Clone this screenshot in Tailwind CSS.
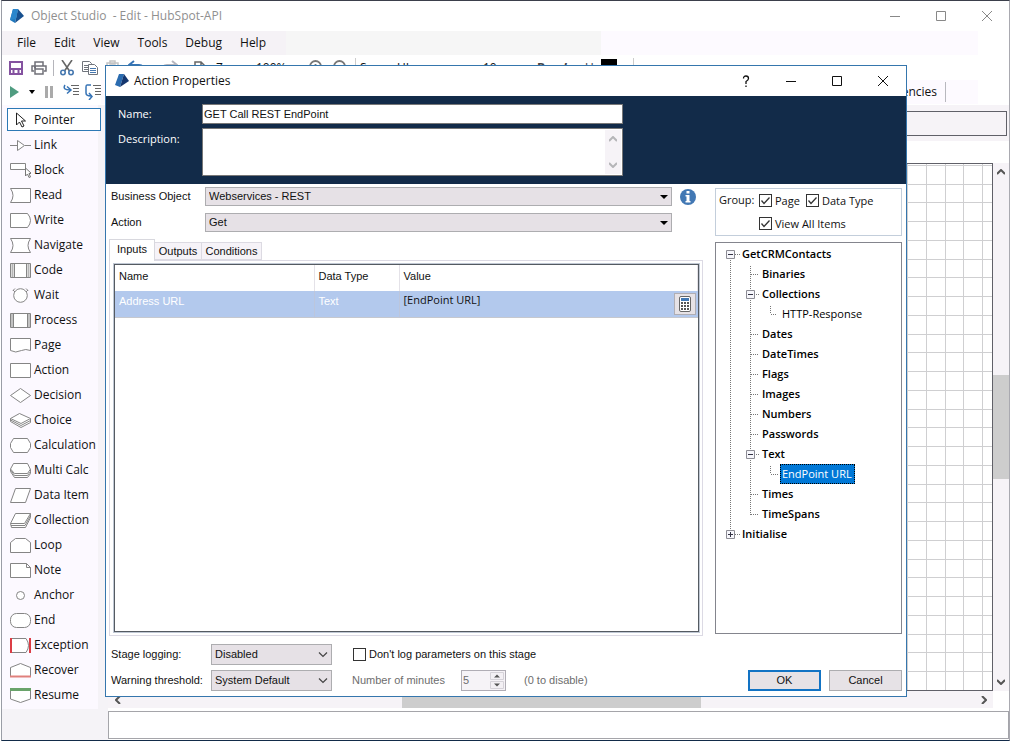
<!DOCTYPE html>
<html lang="en">
<head>
<meta charset="utf-8">
<title>Object Studio</title>
<script src="https://cdn.jsdelivr.net/npm/@tailwindcss/browser@4"></script>
</head>
<body class="relative h-screen overflow-hidden bg-white font-['Open_Sans',sans-serif] text-xs text-[#111]">
<!-- Studio window -->
<div class="mr-0.5 ml-px flex h-full flex-col border-t border-r border-b border-l border-t-[#3b3f4b] border-r-[#a9a9b0] border-b-[#122b49] border-l-[#9a9da6]">
  <header class="flex h-[30px] shrink-0 items-center bg-white pr-[17px] pl-[7px] text-[#8f8f8f]">
    <svg class="mr-1.5 size-4" viewBox="0 0 16 16"><path d="M4 1 9 1 6 15 1 12Z" fill="#1f78bd"/><path d="M9 1 15 8 6 15Z" fill="#17508f"/><path d="M4 1 9 1 7 11 1 12Z" fill="#2a86cc"/></svg>
    <span class="whitespace-pre">Object Studio  - Edit - HubSpot-API</span>
    <div class="ml-auto flex gap-9">
      <button aria-label="Minimize"><svg class="size-2.5" viewBox="0 0 10 10" stroke="#888" fill="none"><path d="M0 5.500H10"/></svg></button>
      <button aria-label="Maximize"><svg class="size-2.5" viewBox="0 0 10 10" stroke="#888" fill="none"><path d="M.5.5h9v9h-9z"/></svg></button>
      <button aria-label="Close"><svg class="size-2.5" viewBox="0 0 10 10" stroke="#888" fill="none"><path d="M0 0 10 10M10 0 0 10"/></svg></button>
    </div>
  </header>
  <div class="flex h-6 shrink-0">
    <nav class="flex w-[284px] items-center gap-[18px] bg-[#f5f2f6] pl-[15px]">
      <button>File</button><button>Edit</button><button>View</button><button>Tools</button><button>Debug</button><button>Help</button>
    </nav>
    <div class="w-[315px] bg-[#f6f6f6]"></div>
    <div class="flex-1 bg-[#fdfaff]"></div>
    <div class="w-[31px]"></div>
  </div>
  <div class="flex h-[25px] shrink-0 items-center pl-[7px] [&_svg]:shrink-0">
    <button aria-label="Save"><svg class="size-3.5" viewBox="0 0 14 14" fill="none" stroke="#8452a0" stroke-width="2"><path d="M1 1h12v12H1zM1 8h12M4.500 9v4M9.500 9v4"/></svg></button>
    <button aria-label="Print" class="ml-2"><svg class="h-3.5 w-4" viewBox="0 0 16 14" fill="none" stroke="#707078" stroke-width="1.500"><path d="M4 5V1h8v4M3 10H1V5h14v5h-2M4 8h8v5H4zM3 6.500h2"/></svg></button>
    <span class="ml-1.5 h-4 w-px bg-[#b5b5bb]"></span>
    <button aria-label="Cut" class="ml-1.5"><svg class="h-4 w-3.5" viewBox="0 0 14 16" fill="none" stroke-width="1.600"><path d="M2 0 9.500 11M12 0 4.500 11" stroke="#666"/><circle cx="3" cy="12.500" r="2.200" stroke="#4678b0"/><circle cx="11" cy="12.500" r="2.200" stroke="#4678b0"/></svg></button>
    <button aria-label="Copy" class="ml-2"><svg class="h-3.5 w-4" viewBox="0 0 16 14" fill="none" stroke="#70747c"><path d="M.5.5h7l2 2v8h-9zM2 4.500h4M2 6.500h4M2 8.500h4"/><path d="M6.500 3.500h6l3 3v7h-9z" fill="#fff"/><path d="M8 7.500h6M8 9.500h6M8 11.500h6" stroke="#4678b0"/></svg></button>
    <button aria-label="Paste" class="ml-2"><svg class="h-4 w-3.5" viewBox="0 0 14 16" fill="none" stroke="#c4c4c4" stroke-width="1.500"><path d="M1 3h11v12H1zM4 4V1h5v3z"/></svg></button>
    <button aria-label="Undo" class="ml-2"><svg class="h-4 w-[18px]" viewBox="0 0 18 16" fill="none" stroke="#3673b5" stroke-width="2"><path d="M6 1 1 5l5 4M2 5h9q5 0 5 6"/></svg></button>
    <button aria-label="Redo" class="ml-3.5"><svg class="h-4 w-[18px]" viewBox="0 0 18 16" fill="none" stroke="#b5b5bd" stroke-width="2"><path d="M12 1l5 4-5 4M16 5H7Q2 5 2 11"/></svg></button>
    <button aria-label="Page" class="ml-4"><svg class="h-3.5 w-3" viewBox="0 0 12 14" fill="none" stroke="#666" stroke-width="1.500"><path d="M1 1h6l4 4v8H1zM7 1v4h4"/></svg></button>
    <span class="ml-2.5 w-10">Zoom</span>
    <span class="w-[53px]">100%</span>
    <button aria-label="Zoom in"><svg class="h-4 w-3.5" viewBox="0 0 14 16" fill="none" stroke="#777" stroke-width="1.800"><circle cx="6.500" cy="6.500" r="5.500"/><path d="M4 6.500h5M6.500 4v5M10 11l3 4"/></svg></button>
    <button aria-label="Zoom out" class="ml-2.5"><svg class="h-4 w-3.5" viewBox="0 0 14 16" fill="none" stroke="#777" stroke-width="1.800"><circle cx="6.500" cy="6.500" r="5.500"/><path d="M4 6.500h5M10 11l3 4"/></svg></button>
    <span class="ml-2 h-5 w-px bg-[#ccc]"></span>
    <span class="ml-1 w-[123px]">Segoe UI</span>
    <span class="w-[54px]">10</span>
    <button class="w-[26px] text-left font-bold text-[#444]">B</button>
    <button class="w-[22px] text-left font-bold italic text-[#444]">I</button>
    <button class="w-4 text-left text-[#444] underline">U</button>
    <span class="mb-1 h-3.5 w-4 bg-black"></span>
    <span class="ml-4 h-5 w-px bg-[#ccc]"></span>
  </div>
  <div class="flex h-[25px] shrink-0 items-center pr-[31px] pb-px pl-2">
    <button aria-label="Run"><svg class="h-3 w-[9px]" viewBox="0 0 9 12"><path d="M0 0 9 6 0 12Z" fill="#4f9c80"/></svg></button>
    <button aria-label="Run options" class="ml-2.5"><svg class="h-1 w-1.5" viewBox="0 0 6 4"><path d="M0 0h6L3 4z"/></svg></button>
    <button aria-label="Pause" class="ml-2.5"><svg class="h-3 w-2" viewBox="0 0 8 12" fill="#aaa"><path d="M0 0h3v12H0zM5 0h3v12H5z"/></svg></button>
    <button aria-label="Step in" class="ml-2.5"><svg class="size-4" viewBox="0 0 16 16" fill="none"><path d="M2 1q-3 5 5 5M4 2.500 8 6 4 9.500" stroke="#3673b5" stroke-width="1.500"/><path d="M8 1.500h8M10 4.500h6M10 7.500h6M10 10.500h6" stroke="#666"/></svg></button>
    <button aria-label="Step over" class="ml-1.5"><svg class="size-4" viewBox="0 0 16 16" fill="none"><path d="M6 1H2Q1 1 1 3v6q0 3 5 3M4 9l3 3.500L4 16" stroke="#3673b5" stroke-width="1.500"/><path d="M8 1.500h8M10 4.500h6M10 7.500h6M10 10.500h6" stroke="#666"/></svg></button>
    <div class="flex flex-1 items-center justify-end gap-2 self-stretch bg-[#fdfaff] pr-8"><span>Dependencies</span><span class="h-5 w-px bg-[#b8b8be]"></span></div>
  </div>
  <div class="flex min-h-0 flex-1">
    <!-- Stage palette -->
    <aside class="flex w-[106px] shrink-0 flex-col bg-[#f5f3f7]">
      <div class="mr-2.5 flex flex-col bg-[#fcf9ff] pt-0.5 pb-0.5 [&_button]:flex [&_button]:h-[25px] [&_button]:items-center [&_button]:gap-[3px] [&_button]:pl-2 [&_button]:text-left [&_button]:whitespace-nowrap [&_svg]:h-4 [&_svg]:w-[21px] [&_svg]:shrink-0 [&_svg]:fill-white [&_svg]:stroke-[#858585]">
        <button class="relative"><span class="absolute inset-y-px -right-[3px] left-[5px] border border-[#2c79b5] bg-white"></span><svg class="relative" viewBox="0 0 21 16"><path d="M6.500 1v12l3-3 2.500 5 2-1-2.500-5h4z" stroke="#222"/></svg><span class="relative">Pointer</span></button>
        <button><svg viewBox="0 0 21 16"><path d="M0 8.500h7M15 8.500h6M7.500 3.500v10l7-5z"/></svg>Link</button>
        <button><svg viewBox="0 0 21 16"><path d="M.5 1.500h15v6H.5z"/><path d="M15.500 6v8l2-2 1.500 3.500 1.500-.5-1.500-3.500h2.500z" stroke="#777"/></svg>Block</button>
        <button><svg viewBox="0 0 21 16"><path d="M.5 1.500h20v14H.5q5-7 0-14z"/></svg>Read</button>
        <button><svg viewBox="0 0 21 16"><path d="M.5 1.500h17q6 7 0 14H.5z"/></svg>Write</button>
        <button><svg viewBox="0 0 21 16"><path d="M.5 1.500h20q-5 7 0 14H.5q5-7 0-14z"/></svg>Navigate</button>
        <button><svg viewBox="0 0 21 16"><path d="M.5 1.500h20v14H.5z"/><path d="M2.500 2v13M18.500 2v13" stroke-width="2" opacity=".6"/><path d="M4.500 2v13M16.500 2v13"/></svg>Code</button>
        <button><svg viewBox="0 0 21 16"><circle cx="10.500" cy="8.500" r="6.800"/><path d="M3 3.500 5 1.500M18 3.500 16 1.500M5 5 3 3M16 5l2-2"/></svg>Wait</button>
        <button><svg viewBox="0 0 21 16"><path d="M.5 1.500h20v14H.5zM3.500 1.500v14M17.500 1.500v14M2 2v13M19 2v13"/></svg>Process</button>
        <button><svg viewBox="0 0 21 16"><path d="M.5 1.500h20v12q-5-2-9 0-6 3-11 0z"/></svg>Page</button>
        <button><svg viewBox="0 0 21 16"><path d="M.5 1.500h20v14H.5z"/></svg>Action</button>
        <button><svg viewBox="0 0 21 16"><path d="M.5 8.500l10-7 10 7-10 7z"/></svg>Decision</button>
        <button><svg viewBox="0 0 21 16"><path d="M.5 9.500 11 15.500l9.500-5v-4L9.500 1.500.5 6.500z"/><path d="M.5 6.500 11 11.500l9.500-5M.5 8 11 13.500l9.500-5"/></svg>Choice</button>
        <button><svg viewBox="0 0 21 16"><path d="M3.500 1.500h14l3 5v4l-3 5h-14l-3-5v-4z"/></svg>Calculation</button>
        <button><svg viewBox="0 0 21 16"><path d="M3.500 1.500h14l3 6v4l-3 4h-13l-4-6V7z"/><path d="M.5 7l4 4.500h13l3-4.500M1 8.500l3.500 5h13l3-4"/></svg>Multi Calc</button>
        <button><svg viewBox="0 0 21 16"><path d="M5.500 1.500h15l-5 14H.5z"/></svg>Data Item</button>
        <button><svg viewBox="0 0 21 16"><path d="M5.500 1.500h15v4l-5 10h-14l-1-4z"/><path d="M.5 11.500h14l6-10M1 13.500h14l5.500-10"/></svg>Collection</button>
        <button><svg viewBox="0 0 21 16"><path d="M.5 15.500v-10l5-4h10l5 4v10z"/></svg>Loop</button>
        <button><svg viewBox="0 0 21 16"><path d="M.5 1.500h16l4 4v10H.5zM16.500 1.500v4h4"/></svg>Note</button>
        <button><svg viewBox="0 0 21 16"><circle cx="10.500" cy="8.500" r="4"/></svg>Anchor</button>
        <button><svg viewBox="0 0 21 16"><rect x=".5" y="1.500" width="20" height="14" rx="6"/></svg>End</button>
        <button><svg viewBox="0 0 21 16"><path d="M1 1.500h15q5 7 0 14H1z"/><path d="M1 1v15M20 1v15" stroke="#dc3d45" stroke-width="2"/></svg>Exception</button>
        <button><svg viewBox="0 0 21 16"><path d="M.5 14.500v-9l10-4 10 4v9z"/><path d="M0 14.500h21" stroke="#e0807c" stroke-width="2"/></svg>Recover</button>
        <button><svg viewBox="0 0 21 16"><path d="M.5 2v10l10 3.500 10-3.500V2z"/><path d="M0 2.500h21" stroke="#69a36a" stroke-width="3"/></svg>Resume</button>
      </div>
    </aside>
    <!-- Diagram area -->
    <main class="flex min-w-0 flex-1 flex-col">
      <div class="h-9 shrink-0 bg-[#f6f3f7] pt-1.5 pr-0.5"><div class="h-[25px] border border-[#606068]"></div></div>
      <div class="mt-[22px] flex min-h-0 flex-1">
        <div class="min-w-0 flex-1 border border-[#606068]">
          <svg class="size-full"><defs><pattern id="grid" width="75" height="75" patternUnits="userSpaceOnUse" x="67" y="1"><path d="M.5 0v75M19.500 0v75M37.500 0v75M56.500 0v75M0 .5h75M0 19.500h75M0 37.500h75M0 56.500h75" stroke="#cfcfd1" fill="none"/></pattern></defs><rect width="100%" height="100%" fill="url(#grid)"/></svg>
        </div>
        <div class="flex w-4 shrink-0 flex-col items-center justify-between bg-[#f6f3f7] py-1.5">
          <svg class="h-1.5 w-2" viewBox="0 0 8 6" fill="none" stroke="#555" stroke-width="2"><path d="M0 5l4-4 4 4"/></svg>
          <div class="h-[104px] w-full bg-[#cdcdcd]"></div>
          <svg class="h-1.5 w-2" viewBox="0 0 8 6" fill="none" stroke="#555" stroke-width="2"><path d="M0 1l4 4 4-4"/></svg>
        </div>
      </div>
      <div class="mr-4 mb-[3px] flex h-[17px] shrink-0 items-center justify-between bg-[#f6f3f7] pr-1.5 pl-[7px]">
        <svg class="h-2 w-1.5" viewBox="0 0 6 8" fill="none" stroke="#555" stroke-width="2"><path d="M5 0 1 4l4 4"/></svg>
        <div class="h-full w-[299px] bg-[#cdcdcd]"></div>
        <svg class="h-2 w-1.5" viewBox="0 0 6 8" fill="none" stroke="#555" stroke-width="2"><path d="M1 0l4 4-4 4"/></svg>
      </div>
      <div class="mb-px h-7 shrink-0 border border-[#a5a5aa]"></div>
    </main>
  </div>
</div>

<!-- Action Properties dialog -->
<section role="dialog" aria-label="Action Properties" class="absolute inset-x-[105px] top-[65px] bottom-11 flex flex-col border border-[#3576ad] bg-white font-['Liberation_Sans',sans-serif] text-[11px]">
  <header class="flex h-[30px] shrink-0 items-center pr-[18px] pl-2 font-['Open_Sans',sans-serif] text-xs">
    <svg class="mr-1 size-4" viewBox="0 0 16 16"><path d="M5 1h5L6 14 1 12z" fill="#2b6cb0"/><path d="M10 1l5 7-9 6z" fill="#14366e"/></svg>
    <h1>Action Properties</h1>
    <div class="ml-auto flex items-center gap-9">
      <button aria-label="Help"><svg class="h-3 w-2" viewBox="0 0 8 12" fill="none" stroke="#111" stroke-width="1.300"><path d="M1.500 3.500Q1.500 1 4 1t2.500 2.500Q6.500 5 4 6.500V9M4 10.500V12"/></svg></button>
      <button aria-label="Minimize"><svg class="size-2.5" viewBox="0 0 10 10" stroke="#111" fill="none"><path d="M0 5.500h10"/></svg></button>
      <button aria-label="Maximize"><svg class="size-2.5" viewBox="0 0 10 10" stroke="#111" fill="none"><path d="M.5.5h9v9h-9z"/></svg></button>
      <button aria-label="Close"><svg class="size-2.5" viewBox="0 0 10 10" stroke="#111" fill="none"><path d="M0 0l10 10M10 0 0 10"/></svg></button>
    </div>
  </header>
  <div class="grid h-[88px] shrink-0 grid-cols-[84px_421px] content-start gap-y-1 bg-[#122b49] pt-2 pl-3">
    <label for="name" class="self-center font-['Open_Sans',sans-serif] text-white">Name:</label>
    <input id="name" value="GET Call REST EndPoint" class="h-5 border border-[#777] bg-white px-px">
    <label for="desc" class="pt-[3px] font-['Open_Sans',sans-serif] leading-4 text-white">Description:</label>
    <div class="flex h-12 border border-[#777] bg-white p-px">
      <textarea id="desc" class="flex-1 resize-none overflow-hidden"></textarea>
      <div class="flex w-4 flex-col items-center justify-between bg-[#f6f3f7] py-1.5">
        <svg class="h-1.5 w-2" viewBox="0 0 8 6" fill="none" stroke="#b5b5b8" stroke-width="2"><path d="M0 5l4-4 4 4"/></svg>
        <svg class="h-1.5 w-2" viewBox="0 0 8 6" fill="none" stroke="#b5b5b8" stroke-width="2"><path d="M0 1l4 4 4-4"/></svg>
      </div>
    </div>
  </div>
  <div class="flex min-h-0 flex-1 gap-3 pt-[3px] pr-1 pl-[3px]">
    <div class="flex min-w-0 flex-1 flex-col">
      <div class="grid shrink-0 grid-cols-[94px_1fr_31px] items-center gap-y-[7px] pl-0.5">
        <label for="bo">Business Object</label>
        <div class="relative h-[19px]"><select id="bo" class="size-full appearance-none border border-[#adadb0] bg-[#e6e1e6] pl-[3px]"><option>Webservices - REST</option></select><svg class="pointer-events-none absolute top-2 right-1 h-1 w-2" viewBox="0 0 8 4"><path d="M0 0h8L4 4z"/></svg></div>
        <button aria-label="Information" class="justify-self-center"><svg class="size-4" viewBox="0 0 16 16"><circle cx="8" cy="8" r="8" fill="#4278b4"/><path d="M6.500 2h3v2.500h-3zM5.500 6h4v6h1v1.500h-5V12h1V7.500h-1z" fill="#fff"/></svg></button>
        <label for="action">Action</label>
        <div class="relative h-[19px]"><select id="action" class="size-full appearance-none border border-[#adadb0] bg-[#e6e1e6] pl-[3px]"><option>Get</option></select><svg class="pointer-events-none absolute top-2 right-1 h-1 w-2" viewBox="0 0 8 4"><path d="M0 0h8L4 4z"/></svg></div>
      </div>
      <div role="tablist" class="relative mt-[7px] -mb-px flex shrink-0 items-end">
        <button role="tab" aria-selected="true" class="h-[22px] w-[46px] border border-b-0 border-[#d8d8de] bg-white pb-0.5">Inputs</button>
        <button role="tab" class="mb-px h-[18px] w-[47px] border border-l-0 border-[#dcdae2] bg-[#f6f3f8]">Outputs</button>
        <button role="tab" class="mb-px h-[18px] w-[60px] border border-l-0 border-[#dcdae2] bg-[#f6f3f8]">Conditions</button>
      </div>
      <div class="flex min-h-0 flex-1 flex-col border border-[#dcdae4] p-0.5 pl-[3px]">
        <div class="flex-1 border border-[#c0c8d4]"><div class="h-full border border-[#555b62]">
          <table class="w-full table-fixed border-collapse text-left">
            <colgroup><col class="w-[199px]"><col class="w-[85px]"><col></colgroup>
            <thead><tr class="h-[26px] [&>th]:border-r [&>th]:border-[#e4e2e8] [&>th]:pb-1 [&>th]:pl-1 [&>th]:font-normal"><th>Name</th><th>Data Type</th><th>Value</th></tr></thead>
            <tbody><tr class="h-[26px] border-b border-[#c6c8ce] bg-[#b3c9ed] text-white"><td class="border-r border-[#bcc6dc] pb-1 pl-1">Address URL</td><td class="border-r border-[#bcc6dc] pb-1 pl-1">Text</td>
            <td class="pl-1"><div class="flex justify-between pr-0.5"><span class="font-['Open_Sans',sans-serif] text-[#111]">[EndPoint URL]</span><button aria-label="Open calculator" class="flex size-[22px] items-center justify-center border border-[#b0aeb4] bg-[#e6e2e6]"><svg class="h-4 w-3" viewBox="0 0 12 16"><rect x=".5" y=".5" width="11" height="15" rx="1.500" fill="#fff" stroke="#666"/><path d="M2 2h8v3H2z" fill="#4278b4"/><path d="M2 7h8M2 10h8M2 13h8" stroke="#555" stroke-width="2" stroke-dasharray="2 1"/></svg></button></div></td></tr></tbody>
          </table>
        </div></div>
      </div>
    </div>
    <div class="flex w-[187px] shrink-0 flex-col gap-1.5 pt-px pb-0.5">
      <fieldset class="grid h-12 shrink-0 grid-cols-[40px_47px_1fr] content-start items-center gap-y-2 border border-[#c3cedb] pt-1 pl-[3px] font-['Open_Sans',sans-serif] [&_input]:size-[13px] [&_input]:appearance-none [&_input]:border [&_input]:border-[#333] [&_input]:bg-white [&_label]:flex [&_label]:items-center [&_label]:gap-[3px] [&_label]:leading-[15px] [&_label]:whitespace-nowrap [&_span]:relative [&_span]:flex [&_svg]:pointer-events-none [&_svg]:absolute [&_svg]:inset-0">
        <span>Group:</span>
        <label><span><input type="checkbox" checked><svg viewBox="0 0 13 13" fill="none" stroke="#333" stroke-width="1.300"><path d="M2.500 6.500 5 9.500l5.500-6"/></svg></span>Page</label>
        <label><span><input type="checkbox" checked><svg viewBox="0 0 13 13" fill="none" stroke="#333" stroke-width="1.300"><path d="M2.500 6.500 5 9.500l5.500-6"/></svg></span>Data Type</label>
        <label class="col-span-2 col-start-2"><span><input type="checkbox" checked><svg viewBox="0 0 13 13" fill="none" stroke="#333" stroke-width="1.300"><path d="M2.500 6.500 5 9.500l5.500-6"/></svg></span>View All Items</label>
      </fieldset>
      <div role="tree" class="flex min-h-0 flex-1 border border-[#84858d] pt-px pl-2.5 font-['Open_Sans',sans-serif] leading-5">
        <svg class="h-[302px] w-4 shrink-0 overflow-visible" fill="none" stroke="#777"><path stroke-dasharray="1 1" d="M4.500 16v270M9 10.500h5M9 290.500h5M24.500 22v250M25 30.500h7M30 50.500h4M44.500 62v8M45 70.500h6M25 90.500h7M25 110.500h7M25 130.500h7M25 150.500h7M25 170.500h7M25 190.500h7M30 210.500h4M44.500 222v8M45 230.500h7M25 250.500h7M25 270.500h7"/><g fill="#f6f6fb" stroke="#8c8c94"><path d="M.5 6.500h8v8h-8zM20.500 46.500h8v8h-8zM20.500 206.500h8v8h-8zM.5 286.500h8v8h-8z"/></g><path stroke="#334" d="M2 10.500h5M22 50.500h5M22 210.500h5M2 290.500h5M4.500 288v5"/></svg>
        <ul class="font-semibold text-black">
          <li>GetCRMContacts
            <ul class="pl-5">
              <li>Binaries</li>
              <li>Collections<ul class="pl-5 font-normal"><li>HTTP-Response</li></ul></li>
              <li>Dates</li><li>DateTimes</li><li>Flags</li><li>Images</li><li>Numbers</li><li>Passwords</li>
              <li>Text<ul class="pl-5 font-normal"><li><span class="-ml-0.5 block h-5 w-[75px] border border-dotted border-black bg-[#0078d7] pl-px leading-[18px] whitespace-nowrap text-white">EndPoint URL</span></li></ul></li>
              <li>Times</li><li>TimeSpans</li>
            </ul>
          </li>
          <li>Initialise</li>
        </ul>
      </div>
    </div>
  </div>
  <footer class="grid h-[60px] shrink-0 grid-cols-[100px_121px_auto_1fr] content-start items-center gap-y-[5px] pt-2 pr-1 pl-[5px]">
    <label for="logging">Stage logging:</label>
    <div class="relative h-[21px]"><select id="logging" class="size-full appearance-none border border-[#adadb0] bg-[#e6e1e6] pl-[3px]"><option>Disabled</option></select><svg class="pointer-events-none absolute top-2 right-1 h-1.5 w-2.5" viewBox="0 0 10 6" fill="none" stroke="#444" stroke-width="1.200"><path d="M1 .5l4 4 4-4"/></svg></div>
    <label class="col-span-2 ml-[21px] flex items-center gap-[3px]"><input type="checkbox" class="size-[13px] appearance-none border border-[#333] bg-white">Don't log parameters on this stage</label>
    <label for="threshold" class="whitespace-nowrap">Warning threshold:</label>
    <div class="relative h-[21px]"><select id="threshold" class="size-full appearance-none border border-[#adadb0] bg-[#e6e1e6] pl-[3px]"><option>System Default</option></select><svg class="pointer-events-none absolute top-2 right-1 h-1.5 w-2.5" viewBox="0 0 10 6" fill="none" stroke="#444" stroke-width="1.200"><path d="M1 .5l4 4 4-4"/></svg></div>
    <div class="ml-5 flex items-center text-[#6d6d6d]">
      <label for="minutes" class="w-[109px]">Number of minutes</label>
      <div class="flex h-[21px] w-[45px] border border-[#b0adb5] bg-[#f6f3f7] p-px"><input id="minutes" disabled value="5" class="min-w-0 flex-1"><svg class="h-full w-3.5" viewBox="0 0 14 17"><path d="M.5.5h13v7H.5zM.5 9.500h13v7H.5z" fill="#f3f0f4" stroke="#d5d2d8"/><path d="M4 5.500h6l-3-3zM4 11.500h6l-3 3z" fill="#555"/></svg></div>
      <span class="ml-[18px] whitespace-nowrap">(0 to disable)</span>
    </div>
    <div class="flex justify-end gap-2">
      <button class="h-[21px] w-[73px] border-2 border-[#1273c4] bg-[#e6e2e6]">OK</button>
      <button class="h-[21px] w-[73px] border border-[#adadb0] bg-[#e6e2e6]">Cancel</button>
    </div>
  </footer>
</section>
</body>
</html>
